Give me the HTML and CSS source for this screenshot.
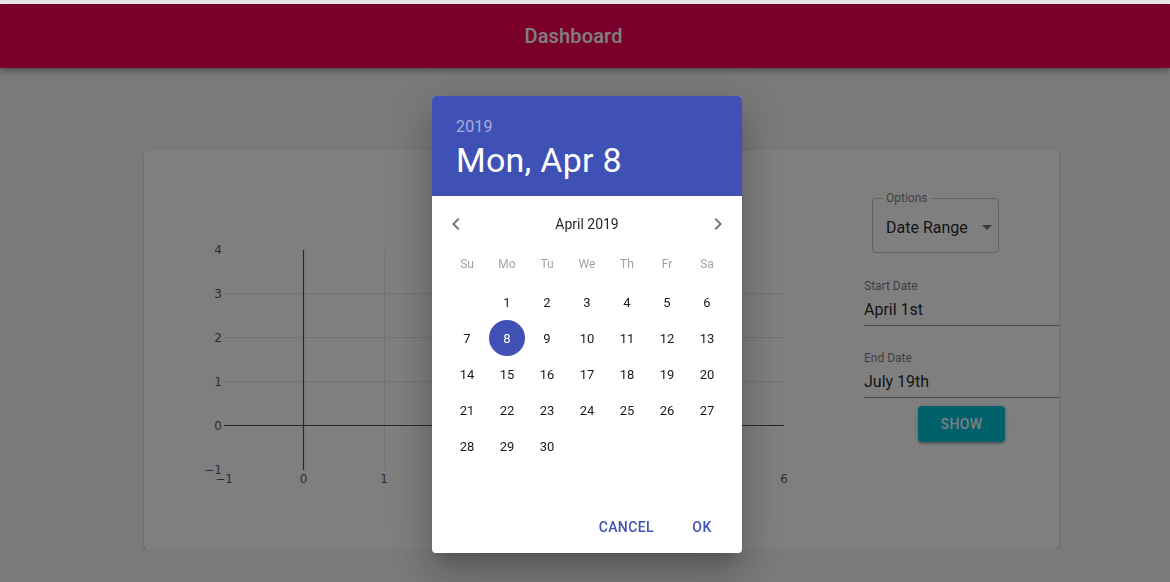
FILE: index.html
```html
<!DOCTYPE html>
<html lang="en">
<head>
<meta charset="utf-8">
<title>Dashboard</title>
<link rel="stylesheet" href="styles.css">
</head>
<body>
<div class="strip"></div>
<header class="appbar"><h1 class="appbar-title">Dashboard</h1></header>
<main class="main">
  <section class="card">
    <svg class="chart" width="720" height="399" viewBox="0 0 720 399">
      <g class="grid">
        <line x1="80" y1="143.5" x2="640" y2="143.5"/>
        <line x1="80" y1="187.5" x2="640" y2="187.5"/>
        <line x1="80" y1="231.5" x2="640" y2="231.5"/>
        <line x1="240.5" y1="100" x2="240.5" y2="320"/>
        <line x1="320.5" y1="100" x2="320.5" y2="320"/>
        <line x1="400.5" y1="100" x2="400.5" y2="320"/>
        <line x1="480.5" y1="100" x2="480.5" y2="320"/>
        <line x1="560.5" y1="100" x2="560.5" y2="320"/>
      </g>
      <g class="axis">
        <line x1="80" y1="275.5" x2="640" y2="275.5"/>
        <line x1="159.5" y1="100" x2="159.5" y2="320"/>
      </g>
      <g class="ylabels">
        <text x="78" y="103.5">4</text>
        <text x="78" y="147.5">3</text>
        <text x="78" y="191.5">2</text>
        <text x="78" y="235.5">1</text>
        <text x="78" y="279.5">0</text>
        <text x="78" y="324">−1</text>
      </g>
      <g class="xlabels">
        <text x="80" y="333">−1</text>
        <text x="159.5" y="333">0</text>
        <text x="240" y="333">1</text>
        <text x="320" y="333">2</text>
        <text x="400" y="333">3</text>
        <text x="480" y="333">4</text>
        <text x="560" y="333">5</text>
        <text x="640" y="333">6</text>
      </g>
    </svg>
    <div class="panel">
      <div class="select">
        <span class="select-label">Options</span>
        <span class="select-value">Date Range</span>
        <svg class="select-arrow" width="24" height="24" viewBox="0 0 24 24"><path d="M7 10l5 5 5-5z"/></svg>
      </div>
      <div class="field">
        <div class="field-label">Start Date</div>
        <div class="field-input">April 1st</div>
      </div>
      <div class="field field-second">
        <div class="field-label">End Date</div>
        <div class="field-input">July 19th</div>
      </div>
      <button class="show-btn">Show</button>
    </div>
  </section>
</main>

<div class="backdrop"></div>

<div class="dialog" role="dialog">
  <div class="toolbar">
    <div class="toolbar-year">2019</div>
    <div class="toolbar-date">Mon, Apr 8</div>
  </div>
  <div class="picker">
    <div class="switch-header">
      <span class="nav"><svg width="24" height="24" viewBox="0 0 24 24"><path d="M15.41 16.59L10.83 12l4.58-4.59L14 6l-6 6 6 6 1.41-1.41z"/></svg></span>
      <span class="month">April 2019</span>
      <span class="nav"><svg width="24" height="24" viewBox="0 0 24 24"><path d="M8.59 16.59L13.17 12 8.59 7.41 10 6l6 6-6 6-1.41-1.41z"/></svg></span>
    </div>
    <div class="days-header">
      <span>Su</span><span>Mo</span><span>Tu</span><span>We</span><span>Th</span><span>Fr</span><span>Sa</span>
    </div>
    <div class="weeks">
      <span class="day first">1</span><span class="day">2</span><span class="day">3</span><span class="day">4</span><span class="day">5</span><span class="day">6</span>
      <span class="day">7</span><span class="day selected">8</span><span class="day">9</span><span class="day">10</span><span class="day">11</span><span class="day">12</span><span class="day">13</span>
      <span class="day">14</span><span class="day">15</span><span class="day">16</span><span class="day">17</span><span class="day">18</span><span class="day">19</span><span class="day">20</span>
      <span class="day">21</span><span class="day">22</span><span class="day">23</span><span class="day">24</span><span class="day">25</span><span class="day">26</span><span class="day">27</span>
      <span class="day">28</span><span class="day">29</span><span class="day">30</span>
    </div>
  </div>
  <div class="actions">
    <button class="text-btn">Cancel</button>
    <button class="text-btn">OK</button>
  </div>
</div>
</body>
</html>
```
FILE: styles.css
```css
* { box-sizing: border-box; }

body {
  margin: 0;
  background: #f5f5f5;
  font-family: Roboto, "Noto Sans", sans-serif;
  overflow: hidden;
}

.strip {
  height: 4px;
  background: linear-gradient(#e6e6e6, #f8f8f8);
}

.appbar {
  position: relative;
  z-index: 1;
  height: 64px;
  background: #f50057;
  display: flex;
  align-items: center;
  justify-content: center;
  padding-right: 23px;
  box-shadow: 0 2px 4px -1px rgba(0,0,0,.2), 0 4px 5px 0 rgba(0,0,0,.14), 0 1px 10px 0 rgba(0,0,0,.12);
}

.appbar-title {
  margin: 0;
  font-size: 20px;
  font-weight: 500;
  letter-spacing: 0.0075em;
  color: #fff;
}

.main {
  padding: 82px 0 0 144px;
}

.card {
  width: 915px;
  height: 399px;
  background: #fff;
  border-radius: 4px;
  box-shadow: 0 1px 3px 0 rgba(0,0,0,.2), 0 1px 1px 0 rgba(0,0,0,.14), 0 2px 1px -1px rgba(0,0,0,.12);
  display: flex;
}

.chart {
  flex: none;
  display: block;
}

.grid line {
  stroke: #e6e6e6;
  stroke-width: 1;
}

.axis line {
  stroke: #555;
  stroke-width: 1.2;
}

.chart text {
  font-family: "DejaVu Sans", Verdana, sans-serif;
  font-size: 12px;
  fill: #5a5a5a;
}

.ylabels text { text-anchor: end; }
.xlabels text { text-anchor: middle; }

.panel {
  width: 195px;
  flex: none;
  padding-top: 40px;
  display: flex;
  flex-direction: column;
}

.select {
  position: relative;
  margin: 8px 0 8px 8px;
  width: 127px;
  height: 55px;
  border: 1px solid rgba(0,0,0,0.23);
  border-radius: 4px;
  display: flex;
  align-items: center;
  padding: 3px 0 0 13px;
}

.select-label {
  position: absolute;
  top: -8px;
  left: 10px;
  padding: 0 3px;
  background: #fff;
  font-size: 12px;
  line-height: 14px;
  color: rgba(0,0,0,0.54);
}

.select-value {
  font-size: 16px;
  color: rgba(0,0,0,0.87);
}

.select-arrow {
  position: absolute;
  right: -1px;
  top: 16px;
  fill: rgba(0,0,0,0.54);
}

.field {
  margin: 16px 0 8px 0;
}

.field-second {
  margin-top: 15px;
}

.field-label {
  font-size: 12px;
  line-height: 18px;
  color: rgba(0,0,0,0.54);
}

.field-input {
  font-size: 16px;
  line-height: 19px;
  padding: 5px 0 6px;
  color: rgba(0,0,0,0.87);
  border-bottom: 1px solid rgba(0,0,0,0.42);
}

.show-btn {
  align-self: center;
  width: 87px;
  height: 36px;
  border: none;
  border-radius: 4px;
  background: #00c2da;
  color: #fff;
  font-family: Roboto, sans-serif;
  font-size: 14px;
  font-weight: 500;
  letter-spacing: 0.02857em;
  text-transform: uppercase;
  box-shadow: 0 1px 5px 0 rgba(0,0,0,.2), 0 2px 2px 0 rgba(0,0,0,.14), 0 3px 1px -2px rgba(0,0,0,.12);
}

.backdrop {
  position: fixed;
  left: 0;
  right: 0;
  top: 4px;
  bottom: 0;
  background: rgba(0,0,0,0.5);
  z-index: 2;
}

.dialog {
  position: fixed;
  left: 432px;
  top: 96px;
  width: 310px;
  z-index: 3;
  background: #fff;
  border-radius: 4px;
  overflow: hidden;
  box-shadow: 0 11px 15px -7px rgba(0,0,0,.2), 0 24px 38px 3px rgba(0,0,0,.14), 0 9px 46px 8px rgba(0,0,0,.12);
}

.toolbar {
  height: 100px;
  background: #3f51b5;
  display: flex;
  flex-direction: column;
  justify-content: center;
  padding: 1px 0 0 24px;
}

.toolbar-year {
  font-size: 16px;
  line-height: 28px;
  letter-spacing: 0.00938em;
  color: rgba(255,255,255,0.54);
}

.toolbar-date {
  font-size: 34px;
  line-height: 39px;
  letter-spacing: 0.00735em;
  color: #fff;
}

.picker {
  height: 301px;
}

.switch-header {
  height: 48px;
  margin: 4px 0 8px;
  display: flex;
  align-items: center;
}

.nav {
  width: 48px;
  height: 48px;
  display: flex;
  align-items: center;
  justify-content: center;
}

.nav svg { fill: rgba(0,0,0,0.54); }

.month {
  flex: 1;
  text-align: center;
  font-size: 14px;
  color: rgba(0,0,0,0.87);
}

.days-header {
  display: flex;
  justify-content: center;
  height: 16px;
}

.days-header span {
  width: 36px;
  margin: 0 2px;
  text-align: center;
  font-size: 12px;
  line-height: 16px;
  color: rgba(0,0,0,0.38);
}

.weeks {
  margin: 12px auto 0;
  width: 276px;
  display: grid;
  grid-template-columns: repeat(7, 36px);
  grid-auto-rows: 36px;
  column-gap: 4px;
}

.day {
  display: flex;
  align-items: center;
  justify-content: center;
  font-size: 13px;
  color: rgba(0,0,0,0.9);
  border-radius: 50%;
}

.day.first { grid-column-start: 2; }

.day.selected {
  background: #3f51b5;
  color: #fff;
}

.actions {
  display: flex;
  justify-content: flex-end;
  gap: 8px;
  padding: 8px;
}

.text-btn {
  min-width: 64px;
  height: 36px;
  padding: 6px 8px;
  border: none;
  background: none;
  font-family: Roboto, sans-serif;
  font-size: 14px;
  font-weight: 500;
  letter-spacing: 0.02857em;
  text-transform: uppercase;
  color: #3f51b5;
}
```
